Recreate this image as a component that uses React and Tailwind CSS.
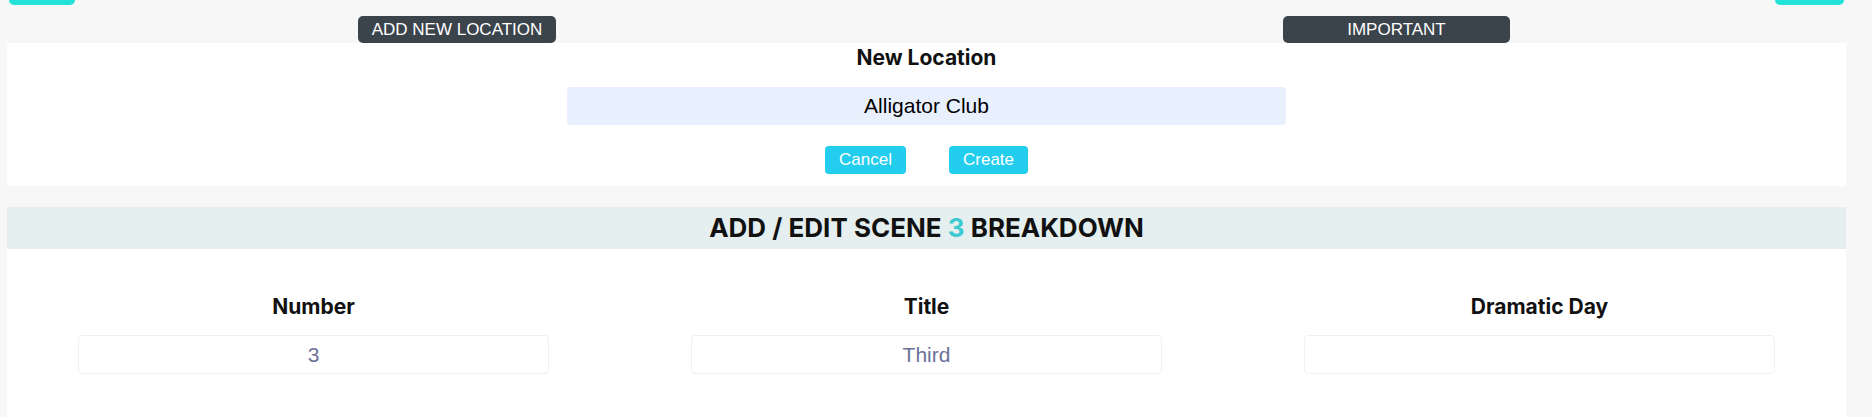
import { useState } from "react";

const fields = [
  { label: "Number", value: "3" },
  { label: "Title", value: "Third" },
  { label: "Dramatic Day", value: "" },
];

export default function App() {
  const [location, setLocation] = useState("Alligator Club");

  return (
    <div className="min-h-[417px] bg-[#f7f7f7] font-['Inter',sans-serif] text-[#111]">
      {/* top strip: cut-off buttons + tab labels */}
      <div className="flex items-start h-[43px]">
        <div className="ml-[9px] w-[66px] h-[5px] bg-[#23e2da] rounded-b-md"></div>
        <div className="ml-[283px] mt-[16px] w-[198px] h-[27px] bg-[#3b434b] rounded-[5px] flex items-center justify-center text-white text-[17px] font-['Liberation_Sans',Arial,sans-serif]">
          ADD NEW LOCATION
        </div>
        <div className="ml-[727px] mt-[16px] w-[227px] h-[27px] bg-[#3b434b] rounded-[5px] flex items-center justify-center text-white text-[17px] font-['Liberation_Sans',Arial,sans-serif]">
          IMPORTANT
        </div>
        <div className="ml-[265px] w-[69px] h-[5px] bg-[#23e2da] rounded-b-md"></div>
      </div>

      {/* new location form */}
      <div className="ml-[7px] w-[1839px] bg-white flex flex-col items-center pt-[3px] pb-[12px]">
        <h2 className="text-[21px] font-bold leading-6">New Location</h2>
        <input
          className="mt-[17px] w-[719px] h-[38px] bg-[#e8f0fe] rounded-sm text-center text-[21px] text-black font-['Liberation_Sans',Arial,sans-serif] outline-none"
          value={location}
          onChange={(e) => setLocation(e.target.value)}
        />
        <div className="flex gap-[43px] mt-[21px]">
          <button className="w-[81px] h-[28px] bg-[#22cdee] rounded-[4px] text-white text-[17px] font-['Liberation_Sans',Arial,sans-serif]">
            Cancel
          </button>
          <button className="w-[79px] h-[28px] bg-[#22cdee] rounded-[4px] text-white text-[17px] font-['Liberation_Sans',Arial,sans-serif]">
            Create
          </button>
        </div>
      </div>

      {/* scene breakdown */}
      <div className="ml-[7px] w-[1839px] mt-[21px]">
        <div className="h-[42px] bg-[#e6eff0] flex items-center justify-center">
          <h2 className="text-[26px] font-bold leading-8">
            ADD / EDIT SCENE <span className="text-[#3cc9d0]">3</span> BREAKDOWN
          </h2>
        </div>
        <div className="bg-white h-[168px] grid grid-cols-3 pt-[46px]">
          {fields.map((field, key) => {
            return (
              <div key={key} className="flex flex-col items-center">
                <h3 className="text-[21px] font-bold leading-6">{field.label}</h3>
                <input
                  className="mt-[16px] w-[471px] h-[39px] border border-[#eef0f4] rounded-sm text-center text-[21px] text-[#6b7199] font-['Liberation_Sans',Arial,sans-serif] outline-none"
                  defaultValue={field.value}
                />
              </div>
            );
          })}
        </div>
      </div>
    </div>
  );
}
